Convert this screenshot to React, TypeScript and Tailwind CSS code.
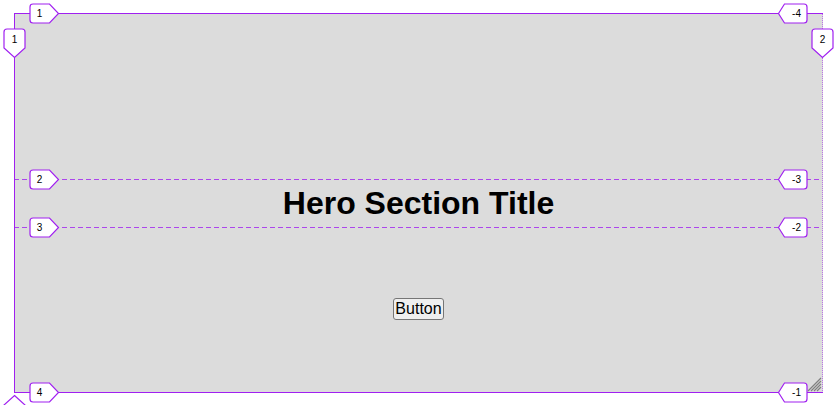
import React from 'react';

const PURPLE = '#a020f0';

type Dir = 'right' | 'left' | 'down' | 'up';

// pentagon tag used by the grid overlay line labels
function tagPath(dir: Dir, tx: number, ty: number): string {
  if (dir === 'right') {
    // tip at (tx, ty), box to the left
    const x0 = tx - 28.5;
    const x1 = tx - 9;
    return `M${x0 + 3} ${ty - 9.5} H${x1} L${tx} ${ty} L${x1} ${ty + 9.5} H${x0 + 3} Q${x0} ${ty + 9.5} ${x0} ${ty + 6.5} V${ty - 6.5} Q${x0} ${ty - 9.5} ${x0 + 3} ${ty - 9.5} Z`;
  }
  if (dir === 'left') {
    const x0 = tx + 6;
    const x1 = tx + 28.5;
    return `M${tx} ${ty} L${x0} ${ty - 9.5} H${x1 - 3} Q${x1} ${ty - 9.5} ${x1} ${ty - 6.5} V${ty + 6.5} Q${x1} ${ty + 9.5} ${x1 - 3} ${ty + 9.5} H${x0} Z`;
  }
  if (dir === 'down') {
    const y0 = ty - 28.5;
    const y1 = ty - 9.5;
    return `M${tx - 10.5} ${y0 + 3} Q${tx - 10.5} ${y0} ${tx - 7.5} ${y0} H${tx + 7.5} Q${tx + 10.5} ${y0} ${tx + 10.5} ${y0 + 3} V${y1} L${tx} ${ty} L${tx - 10.5} ${y1} Z`;
  }
  const y1 = ty + 9.5;
  return `M${tx} ${ty} L${tx + 10.5} ${y1} V${ty + 30} H${tx - 10.5} V${y1} Z`;
}

interface TagProps {
  dir: Dir;
  x: number;
  y: number;
  label?: string;
}

function Tag({ dir, x, y, label }: TagProps) {
  let textX = x;
  let textY = y + 3.5;
  if (dir === 'right') textX = x - 19;
  if (dir === 'left') textX = x + 18;
  if (dir === 'down') textY = y - 15;
  return (
    <g>
      <path d={tagPath(dir, x, y)} fill="#ffffff" stroke={PURPLE} strokeWidth={1.2} />
      {label && (
        <text x={textX} y={textY} fontSize={10} textAnchor="middle" fill="#000000">
          {label}
        </text>
      )}
    </g>
  );
}

export default function App() {
  return (
    <div className="relative h-[405px] w-[838px] overflow-hidden bg-white font-['Liberation_Sans',Arial,sans-serif] text-black">
      <div className="pl-[14px] pt-[13px]">
        <div className="grid h-[380px] w-[809px] grid-rows-[166px_48px_1fr] bg-[#dcdcdc]">
          <div />
          <h1 className="self-center text-center text-[32px] font-bold leading-[37px]">Hero Section Title</h1>
          <div className="flex items-center justify-center pb-[3px]">
            <button
              type="button"
              className="rounded-[3px] border border-[#767676] bg-[#efefef] px-px text-[16px] leading-[20px] text-black"
            >
              Button
            </button>
          </div>
        </div>
      </div>

      {/* devtools grid overlay */}
      <svg
        className="pointer-events-none absolute inset-0 font-['Liberation_Sans',Arial,sans-serif]"
        width={838}
        height={405}
        viewBox="0 0 838 405"
      >
        {/* resize grip */}
        <g stroke="#808080" strokeWidth={1.3}>
          <line x1={808} y1={391} x2={821} y2={378} />
          <line x1={811} y1={391} x2={821} y2={381} />
          <line x1={814} y1={391} x2={821} y2={384} />
          <line x1={817} y1={391} x2={821} y2={387} />
        </g>

        <line x1={14} y1={179.5} x2={822} y2={179.5} stroke={PURPLE} strokeOpacity={0.8} strokeDasharray="5 3" />
        <line x1={14} y1={227.5} x2={822} y2={227.5} stroke={PURPLE} strokeOpacity={0.8} strokeDasharray="5 3" />
        <line x1={822.5} y1={14} x2={822.5} y2={392} stroke={PURPLE} strokeOpacity={0.55} strokeDasharray="1 1" />
        <line x1={14} y1={13.5} x2={823} y2={13.5} stroke={PURPLE} />
        <line x1={14} y1={392.5} x2={823} y2={392.5} stroke={PURPLE} />
        <line x1={14.5} y1={13} x2={14.5} y2={393} stroke={PURPLE} />

        <Tag dir="right" x={58.5} y={13.5} label="1" />
        <Tag dir="right" x={58.5} y={179.5} label="2" />
        <Tag dir="right" x={58.5} y={227.5} label="3" />
        <Tag dir="right" x={58.5} y={392.5} label="4" />

        <Tag dir="left" x={778.5} y={13.5} label="-4" />
        <Tag dir="left" x={778.5} y={179.5} label="-3" />
        <Tag dir="left" x={778.5} y={227.5} label="-2" />
        <Tag dir="left" x={778.5} y={392.5} label="-1" />

        <Tag dir="down" x={14.5} y={57.5} label="1" />
        <Tag dir="down" x={822.5} y={57.5} label="2" />
        <Tag dir="up" x={14.5} y={395.5} />
      </svg>
    </div>
  );
}
